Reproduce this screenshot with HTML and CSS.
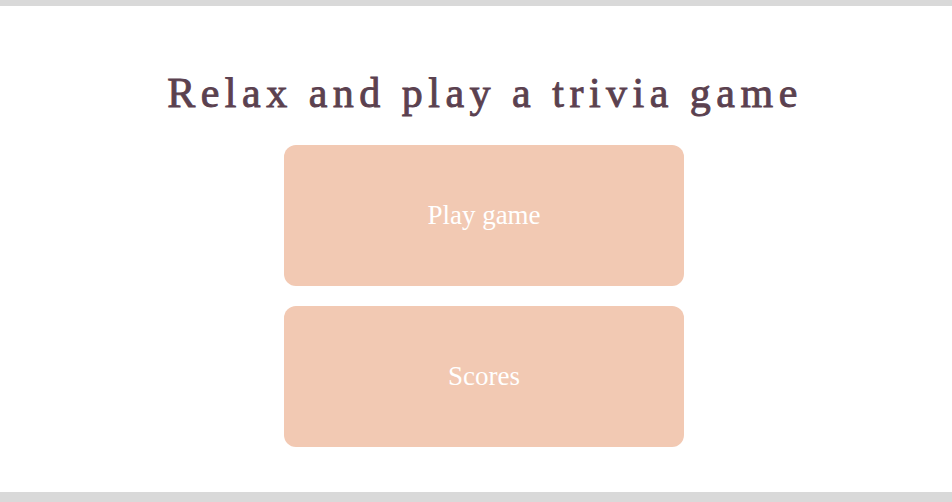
FILE: index.html
```html
<!DOCTYPE html>
<html>
<head>
<meta charset="utf-8">
<link rel="stylesheet" href="styles.css">
</head>
<body>
<main class="page">
  <h1 class="title">Relax and play a trivia game</h1>
  <div class="menu">
    <button class="menu-btn">Play game</button>
    <button class="menu-btn">Scores</button>
  </div>
</main>
</body>
</html>
```
FILE: styles.css
```css
html, body {
  margin: 0;
  padding: 0;
  background: #d9d9d9;
}
.page {
  margin-top: 6px;
  height: 486px;
  background: #ffffff;
  display: flex;
  flex-direction: column;
  align-items: center;
  padding-left: 18px;
  box-sizing: border-box;
  font-family: "Liberation Serif", serif;
}
.title {
  margin: 60px 0 0 0;
  font-family: "Liberation Serif", serif;
  font-size: 42px;
  line-height: 55px;
  font-weight: normal;
  letter-spacing: 5.5px;
  color: #5b414f;
  -webkit-text-stroke: 0.9px #5b414f;
}
.menu {
  margin-top: 24px;
  margin-right: 2px;
  display: flex;
  flex-direction: column;
  gap: 20px;
}
.menu-btn {
  width: 400px;
  height: 141px;
  border: none;
  border-radius: 12px;
  background: #f2c9b3;
  color: #ffffff;
  font-family: "Liberation Serif", serif;
  font-size: 27px;
  cursor: pointer;
}
```
